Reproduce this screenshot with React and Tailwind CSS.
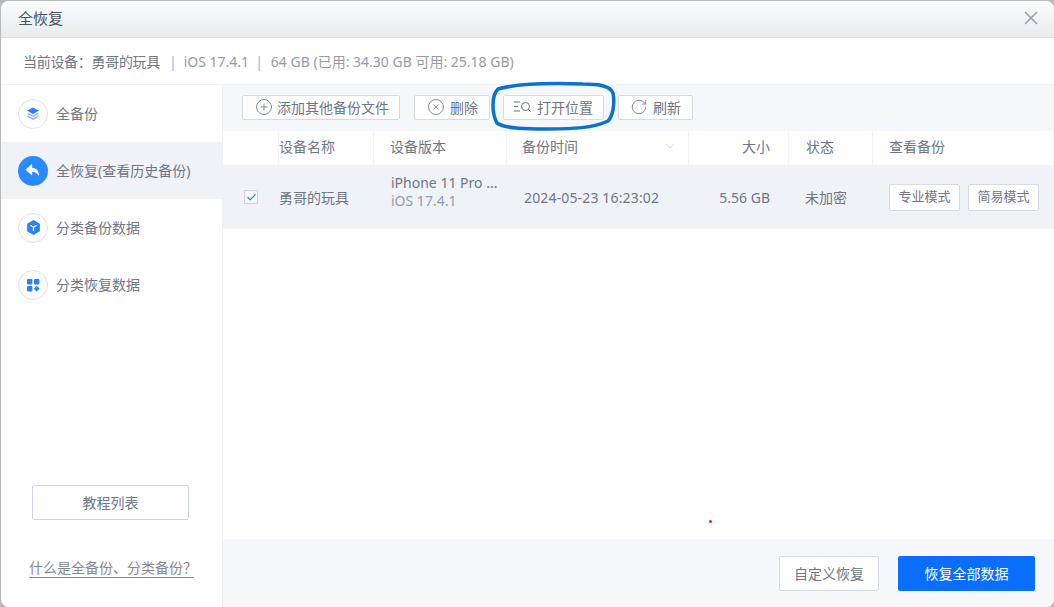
import React from 'react';
import { X, CirclePlus, CircleX, RotateCw, ChevronDown, Check } from 'lucide-react';

const SideIcon = ({ active, children }) => (
  <span className={`flex h-[30px] w-[30px] items-center justify-center rounded-full ${active ? 'bg-[#2b8aff]' : 'border border-[#dfe2e8] bg-white'}`}>
    {children}
  </span>
);

const SideItem = ({ label, active, children }) => (
  <div className={`flex h-[57px] items-center gap-[8px] pl-[17px] ${active ? 'bg-[#f0f2f7]' : ''}`}>
    <SideIcon active={active}>{children}</SideIcon>
    <span className="text-[14px] text-[#6f7684]">{label}</span>
  </div>
);

const ToolButton = ({ icon, label, className }) => (
  <button className={`flex h-[25px] items-center rounded-[2px] border border-[#d5dae3] bg-white text-[14px] text-[#6f7684] ${className}`}>
    {icon}
    {label}
  </button>
);

const HeadCell = ({ children, className }) => (
  <div className={`flex h-full items-center border-r border-[#f2f4f8] pb-[4px] text-[14px] text-[#6f7684] ${className}`}>{children}</div>
);

export default function App() {
  return (
    <div className="relative h-[607px] w-[1054px] overflow-hidden bg-[#b9b9b9] font-['Noto_Sans','Noto_Sans_CJK_SC',sans-serif]">
      <div className="flex h-[606px] w-[1053px] translate-x-[1px] translate-y-[1px] flex-col overflow-hidden rounded-[8px] bg-white">
        <div className="flex h-[37px] shrink-0 items-center justify-between border-b border-[#d9dde4] bg-gradient-to-b from-[#fbfcfd] to-[#e8ebf0] pb-[2px] pl-[17px] pr-[12px]">
          <span className="text-[15px] text-[#4a5160]">全恢复</span>
          <X size={22} strokeWidth={1.800} className="text-[#9aa1ad]" />
        </div>
        <div className="flex h-[47px] shrink-0 items-center border-b border-[#eef1f6] pl-[22px] text-[14px] text-[#6f7684]">
          <span className="w-[137px] whitespace-nowrap tracking-[-0.3px]">{'当前设备\uFF1A勇哥的玩具'}</span>
          <span className="ml-[9px] mr-[7px] text-[#8eb4dc]">|</span>
          <span className="text-[#959ba7]">iOS 17.4.1</span>
          <span className="ml-[6px] mr-[8px] text-[#8eb4dc]">|</span>
          <span className="text-[#959ba7]">64 GB (已用: 34.30 GB 可用: 25.18 GB)</span>
        </div>
        <div className="flex min-h-0 flex-1">
          <div className="flex w-[222px] shrink-0 flex-col border-r border-[#eef1f6]">
            <div className="flex h-[57px] items-center gap-[8px] pl-[17px]">
              <SideIcon>
                <svg width="16" height="16" viewBox="0 0 16 16">
                  <path d="M8 1.500 14 4.800 8 8.100 2 4.800Z" fill="#2b82f6" />
                  <path d="M2.600 7.400 8 10.300l5.400-2.900M2.600 10.200 8 13.200l5.400-3" fill="none" stroke="#7fb2f8" strokeWidth="1.400" />
                </svg>
              </SideIcon>
              <span className="text-[14px] text-[#6f7684]">全备份</span>
            </div>
            <SideItem label="全恢复(查看历史备份)" active>
              <svg width="20" height="20" viewBox="0 0 18 18">
                <path d="M8.200 2.500 2.200 7.800l6 5.200V9.900c2.900-.1 4.700 1 6.200 3.600.2-4.100-2.200-7.200-6.200-7.500Z" fill="#fff" />
              </svg>
            </SideItem>
            <SideItem label="分类备份数据">
              <svg width="17" height="17" viewBox="0 0 16 16">
                <path d="M8 1 14 4.400v7.200L8 15 2 11.600V4.400Z" fill="#2b82f6" />
                <path d="M5.200 5.800 8 7.800l2.800-2M8 7.800v3.400" stroke="#fff" strokeWidth="1.200" fill="none" />
              </svg>
            </SideItem>
            <SideItem label="分类恢复数据">
              <svg width="16" height="16" viewBox="0 0 16 16" fill="#2b82f6">
                <rect x="2" y="2" width="5.400" height="5.400" rx=".8" />
                <rect x="9" y="2" width="5.400" height="5.400" rx=".8" />
                <rect x="2" y="9" width="5.400" height="5.400" rx=".8" />
                <path d="M11.700 8.800 14.600 11.700 11.700 14.600 8.800 11.700Z" />
              </svg>
            </SideItem>
            <div className="mt-auto flex flex-col items-center pb-[29px] pr-[2px]">
              <button className="h-[35px] w-[157px] rounded-[2px] border border-[#ced5df] bg-white text-[14px] text-[#6f7684]">教程列表</button>
              <span className="ml-[2px] mt-[38px] w-[165px] whitespace-nowrap border-b border-[#8a8a8a] text-[14px] leading-[19px] text-[#84888f]">{'什么是全备份、分类备份\uFF1F'}</span>
            </div>
          </div>
          <div className="flex min-w-0 flex-1 flex-col">
            <div className="flex h-[46px] shrink-0 items-center gap-[14px] bg-[#f5f7fa] pb-[2px] pl-[19px]">
              <ToolButton
                className="w-[158px] pl-[12px]"
                icon={<CirclePlus size={18} strokeWidth={1.100} className="mr-[4px] text-[#6d7582]" />}
                label="添加其他备份文件"
              />
              <ToolButton
                className="w-[76px] pl-[12px]"
                icon={<CircleX size={18} strokeWidth={1.100} className="mr-[5px] text-[#6d7582]" />}
                label="删除"
              />
              <ToolButton
                className="-ml-[1px] w-[101px] pl-[10px]"
                icon={
                  <svg width="17" height="14" viewBox="0 0 17 14" fill="none" stroke="#6d7582" strokeWidth="1" className="mr-[6px]">
                    <path d="M0 2h6M0 6.500h4M0 11h6" />
                    <circle cx="11.500" cy="6.500" r="4" />
                    <path d="m14.500 9.500 2 2" />
                  </svg>
                }
                label="打开位置"
              />
              <ToolButton
                className="w-[75px] pl-[11px]"
                icon={<RotateCw size={18} strokeWidth={1.100} className="mr-[5px] text-[#6d7582]" />}
                label="刷新"
              />
            </div>
            <div className="grid h-[34px] shrink-0 grid-cols-[56px_95px_133px_182px_100px_84px_1fr] items-center">
              <HeadCell />
              <HeadCell className="">设备名称</HeadCell>
              <HeadCell className="pl-[16px]">设备版本</HeadCell>
              <HeadCell className="justify-between pl-[15px] pr-[10px]">
                备份时间
                <ChevronDown size={16} strokeWidth={1} className="text-[#c6cbd3]" />
              </HeadCell>
              <HeadCell className="justify-end pr-[18px]">大小</HeadCell>
              <HeadCell className="pl-[17px]">状态</HeadCell>
              <HeadCell className="pl-[16px]">查看备份</HeadCell>
            </div>
            <div className="grid h-[64px] shrink-0 grid-cols-[56px_95px_133px_182px_100px_84px_1fr] items-center bg-[#eff2f7] text-[14px] text-[#6f7684]">
              <div className="flex justify-center">
                <span className="flex h-[14px] w-[14px] items-center justify-center rounded-[1px] border border-[#c9d2de] bg-[#f5f7fb]">
                  <Check size={11} strokeWidth={2.400} className="text-[#2b82f6]" />
                </span>
              </div>
              <div>勇哥的玩具</div>
              <div className="pb-[10px] pl-[17px] leading-[18px]">
                <div>iPhone 11 Pro ...</div>
                <div className="text-[#959ba7]">iOS 17.4.1</div>
              </div>
              <div className="pl-[17px] tracking-[0.15px]">2024-05-23 16:23:02</div>
              <div className="pr-[19px] text-right">5.56 GB</div>
              <div className="pl-[16px]">未加密</div>
              <div className="flex gap-[8px] pl-[16px]">
                <button className="h-[27px] w-[71px] rounded-[2px] border border-[#d5dae3] bg-white text-[13px] text-[#6f7684]">专业模式</button>
                <button className="h-[27px] w-[71px] rounded-[2px] border border-[#d5dae3] bg-white text-[13px] text-[#6f7684]">简易模式</button>
              </div>
            </div>
            <div className="flex-1" />
            <div className="flex h-[68px] shrink-0 items-center justify-end gap-[19px] bg-[#f5f7fa] pr-[19px]">
              <button className="h-[35px] w-[100px] rounded-[2px] border border-[#d5dae3] bg-white text-[14px] text-[#6f7684]">自定义恢复</button>
              <button className="h-[35px] w-[137px] rounded-[2px] bg-[#0a6fff] text-[14px] text-white">恢复全部数据</button>
            </div>
          </div>
        </div>
      </div>
      <span className="absolute left-[709px] top-[520px] h-[3px] w-[3px] rounded-full bg-[#e8203c]" />
      <svg className="pointer-events-none absolute left-[488px] top-[78px]" width="130" height="56" viewBox="0 0 130 56" fill="none">
        <path d="M10 11C30 5 65 5 95 6 108 6 122 7 125 15 127 25 125 38 120 43 105 50 85 51 60 51 40 51 18 51 9 45 4 36 3 18 10 11Z" stroke="#0b73c9" strokeWidth="3.500" />
      </svg>
    </div>
  );
}
